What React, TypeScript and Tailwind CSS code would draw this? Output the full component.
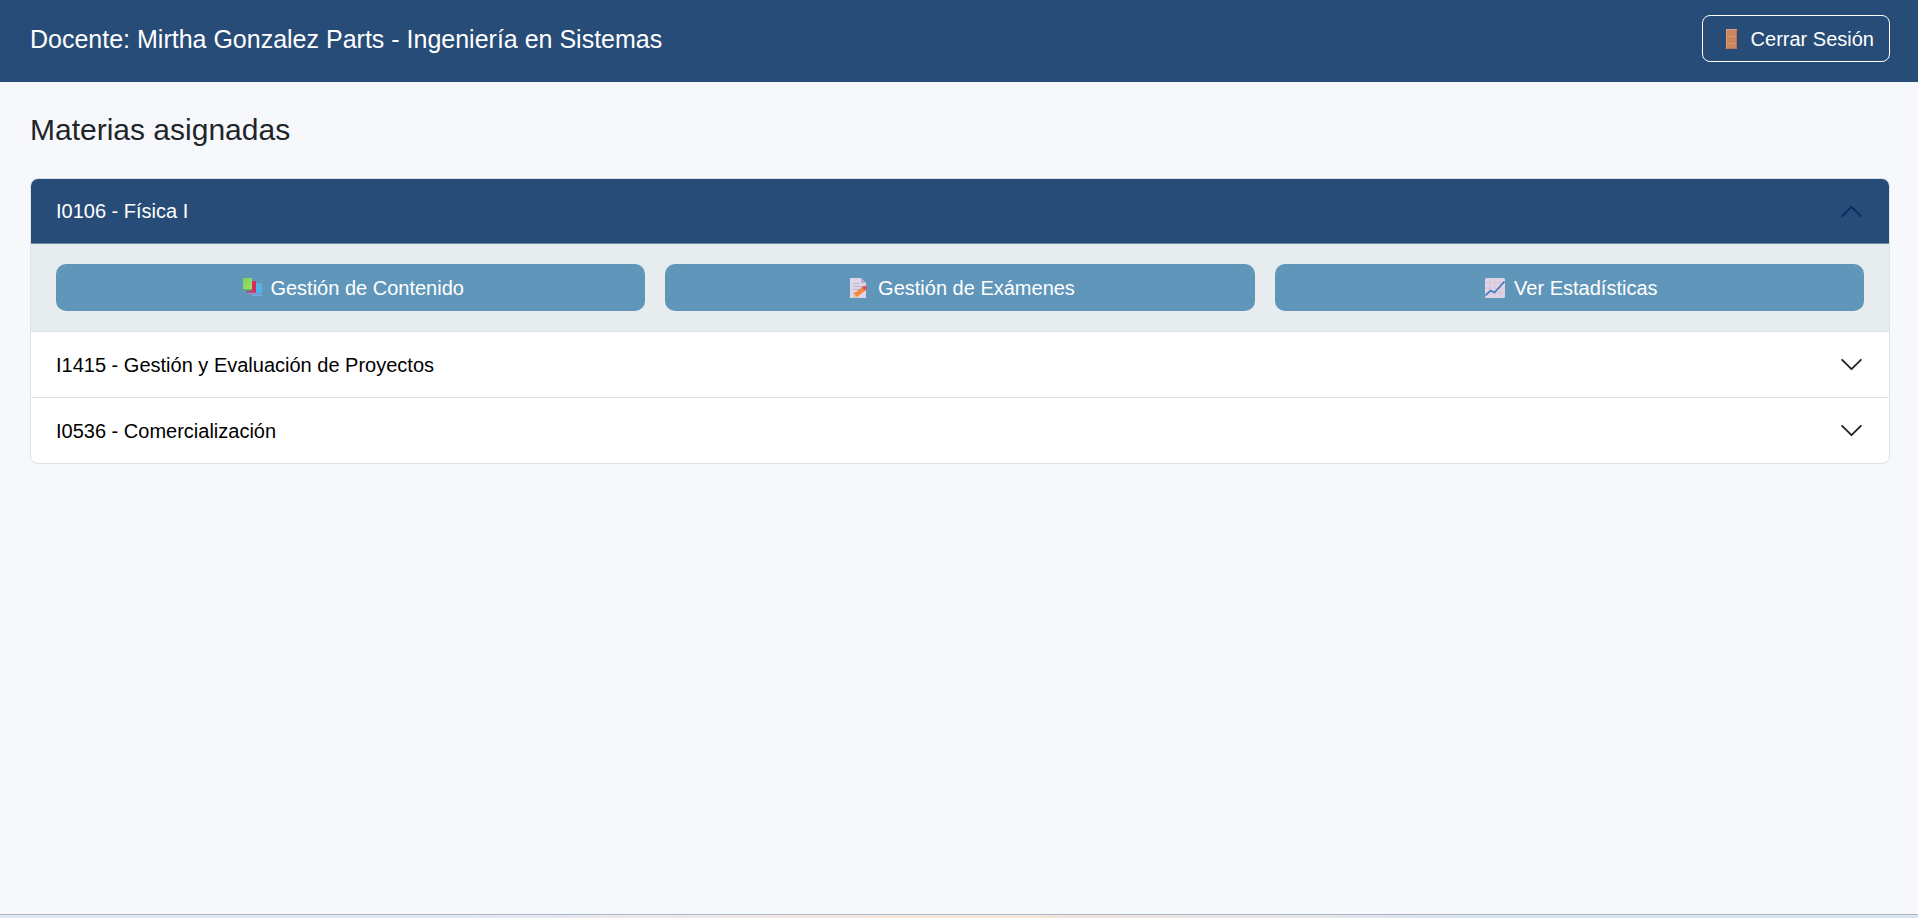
import { useState } from "react";
import type { ReactNode } from "react";

function DoorIcon() {
  return (
    <svg className="h-6 w-7" viewBox="0 0 28 24" aria-hidden="true">
      <rect x="8" y="2" width="11" height="20" fill="#cb8561" />
      <path d="M8 2h11v1H8zM8 2h1v20H8z" fill="#dc9e77" />
      <path d="M10 9.5h7M10 16.500h7" stroke="#e09a5e" strokeWidth="1" />
      <path d="M18.500 3v19M9 21.500h9" stroke="#b57355" />
    </svg>
  );
}

function BooksIcon() {
  return (
    <svg className="h-6 w-7" viewBox="0 0 28 24" aria-hidden="true">
      <defs>
        <linearGradient id="bookGreen" x1="0" y1="0" x2="1" y2="1">
          <stop offset="0" stopColor="#7bd352" />
          <stop offset="1" stopColor="#a4e06f" />
        </linearGradient>
        <linearGradient id="bookBlue" x1="0" y1="0" x2="0" y2="1">
          <stop offset="0" stopColor="#62aedb" />
          <stop offset="1" stopColor="#3ebcf2" />
        </linearGradient>
      </defs>
      <path d="M17 7h8v10h-8z" fill="url(#bookBlue)" />
      <path d="M16 17h9v1.500h-9z" fill="#8a7fce" />
      <path d="M15 18.500h10v1H15z" fill="#6bc3f2" />
      <path d="M13 5h6v12h-6z" fill="#d92c5d" />
      <path d="M9 15h9v1.500H9z" fill="#a04086" />
      <path d="M11.500 16.500H19V18h-7.500z" fill="#c078b6" />
      <path d="M6 2h9v12H6z" fill="url(#bookGreen)" />
      <path d="M6 13h9v1.500H6z" fill="#5eb35b" />
    </svg>
  );
}

function ExamIcon() {
  return (
    <svg className="h-6 w-7" viewBox="0 0 28 24" aria-hidden="true">
      <path d="M5 2h11l5 5v15H5z" fill="#dcd6e6" />
      <path d="M16 2l5 5h-5z" fill="#b6accb" />
      <path d="M8 7.500h6M8 10.500h10M8 13.500h7M8 16.500h4" stroke="#bcb4cf" />
      <path d="M9 17.500l9-7 3 3.500-9 7-4 .500z" fill="#f58b43" />
      <path d="M17 11.500l1.500-1.500q2-1 3.500 1.500l-.500 1.500-1.500 1.500z" fill="#e44d5d" />
      <path d="M9 17.500l3 3.500-4 .500z" fill="#f1c29b" />
    </svg>
  );
}

function ChartIcon() {
  return (
    <svg className="h-6 w-7" viewBox="0 0 28 24" aria-hidden="true">
      <rect x="4" y="2" width="20" height="20" rx="1.500" fill="#dcd6e8" />
      <path d="M9 2v20M14 2v20M19 2v20M4 7h20M4 12h20M4 17h20" stroke="#dfbccd" strokeWidth="0.800" />
      <path
        d="M4.500 19.500l5-5 4 2 10-11"
        fill="none"
        stroke="#3f78bd"
        strokeWidth="1.700"
      />
    </svg>
  );
}

function Chevron({ open }: { open: boolean }) {
  return (
    <svg
      className={open ? "size-[25px] rotate-180 text-[#052c65]" : "size-[25px] text-[#212529]"}
      viewBox="0 0 16 16"
      fill="none"
      stroke="currentColor"
      strokeWidth="1.200"
      strokeLinecap="round"
      strokeLinejoin="round"
      aria-hidden="true"
    >
      <path d="m2 5 6 6 6-6" />
    </svg>
  );
}

function ActionButton({ icon, children }: { icon: ReactNode; children: ReactNode }) {
  return (
    <button
      type="button"
      className="flex h-[47px] items-center justify-center gap-[5px] rounded-[10px] bg-[#6096ba] px-4 text-white hover:bg-[#5488ac]"
    >
      {icon}
      {children}
    </button>
  );
}

const subjects = [
  { code: "I0106", name: "Física I" },
  { code: "I1415", name: "Gestión y Evaluación de Proyectos" },
  { code: "I0536", name: "Comercialización" },
];

export default function App() {
  const [openCode, setOpenCode] = useState<string | null>("I0106");

  return (
    <div className="flex min-h-screen flex-col bg-[#f7f8fc] font-['Liberation_Sans',Arial,sans-serif] text-[20px] leading-[30px] text-[#212529]">
      <header className="flex items-center justify-between bg-[#274c77] pt-[15px] pr-7 pb-5 pl-[30px] text-white">
        <h1 className="text-[25px]">Docente: Mirtha Gonzalez Parts - Ingeniería en Sistemas</h1>
        <button
          type="button"
          className="flex h-[47px] items-center gap-[5px] rounded-lg border border-white px-[15px] hover:bg-white/10"
        >
          <DoorIcon />
          Cerrar Sesión
        </button>
      </header>

      <main className="pt-[30px] pr-7 pb-[30px] pl-[30px]">
        <h2 className="mb-[30px] text-[30px] leading-9">Materias asignadas</h2>

        <div className="divide-y divide-[#dee2e6] overflow-hidden rounded-lg border border-[#dee2e6] bg-white">
          {subjects.map(({ code, name }) => {
            const open = code === openCode;
            return (
              <section key={code}>
                <h3>
                  <button
                    type="button"
                    aria-expanded={open}
                    aria-controls={`panel-${code}`}
                    onClick={() => setOpenCode(open ? null : code)}
                    className={
                      open
                        ? "flex h-[65px] w-full items-center justify-between border-b border-[#6f89a5] bg-[#274c77] px-[25px] text-left text-white"
                        : "flex h-[65px] w-full items-center justify-between px-[25px] text-left text-black"
                    }
                  >
                    {code} - {name}
                    <Chevron open={open} />
                  </button>
                </h3>
                <div
                  id={`panel-${code}`}
                  hidden={!open}
                  className="bg-[#e7ecef] px-[25px] py-5"
                >
                  <div className="grid grid-cols-3 gap-5">
                    <ActionButton icon={<BooksIcon />}>Gestión de Contenido</ActionButton>
                    <ActionButton icon={<ExamIcon />}>Gestión de Exámenes</ActionButton>
                    <ActionButton icon={<ChartIcon />}>Ver Estadísticas</ActionButton>
                  </div>
                </div>
              </section>
            );
          })}
        </div>
      </main>

      <footer className="mt-auto h-1 border-t border-[#a9b7c6] bg-linear-to-r from-[#e4e8f6] from-24% via-[#fae6d8] via-50% to-[#dce4f0] to-76%" />
    </div>
  );
}
